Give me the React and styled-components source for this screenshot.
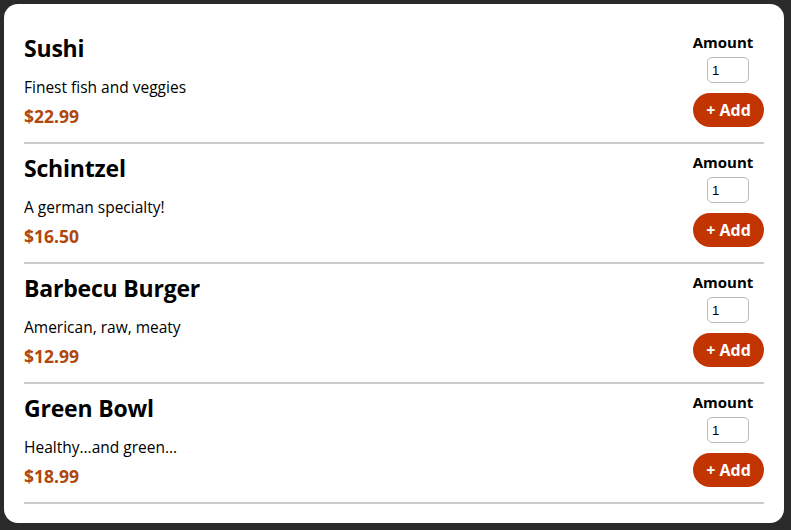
import React from "react";
import styled, { createGlobalStyle } from "styled-components";

const Global = createGlobalStyle`
  * { box-sizing: border-box; }
  html, body { margin: 0; padding: 0; }
  body {
    background: #2a2a2a;
    font-family: "Open Sans", "Noto Sans", sans-serif;
  }
`;

const Page = styled.main`
  padding: 4px 7px 7px 4px;
`;

const Card = styled.section`
  background: #ffffff;
  border-radius: 14px;
  padding: 20px 20px 19px;
`;

const List = styled.ul`
  list-style: none;
  margin: 0;
  padding: 0;
`;

const Item = styled.li`
  display: flex;
  justify-content: space-between;
  align-items: flex-start;
  padding: 9px 0 15px;
  border-bottom: 2px solid #cccccc;
`;

const Info = styled.div`
  display: flex;
  flex-direction: column;
`;

const Title = styled.h3`
  margin: 0;
  font-size: 23px;
  line-height: 30px;
  font-weight: 700;
  color: #000;
  letter-spacing: -0.2px;
`;

const Description = styled.p`
  margin: 14px 0 0;
  font-size: 15.5px;
  line-height: 20px;
  color: #000;
`;

const Price = styled.div`
  margin-top: 8px;
  font-size: 17.5px;
  line-height: 22px;
  font-weight: 700;
  color: #b0470e;
`;

const Form = styled.form`
  display: flex;
  flex-direction: column;
  align-items: flex-end;
`;

const AmountBox = styled.div`
  display: flex;
  flex-direction: column;
  align-items: center;
  width: 71px;
`;

const Label = styled.label`
  margin-right: 11px;
  font-size: 15px;
  line-height: 18px;
  font-weight: 700;
  color: #000;
  white-space: nowrap;
`;

const Input = styled.input`
  margin-top: 6px;
  margin-right: 1px;
  width: 42px;
  height: 26px;
  border: 1px solid #bbbbbb;
  border-radius: 5px;
  padding: 0 4px;
  font-family: "Liberation Sans", Arial, sans-serif;
  font-size: 13px;
  color: #000;
  background: #fff;
`;

const AddButton = styled.button`
  margin-top: 10px;
  width: 71px;
  height: 34px;
  border: none;
  border-radius: 17px;
  background: #c23400;
  color: #fff;
  font-family: inherit;
  font-size: 16px;
  font-weight: 700;
  cursor: pointer;
  padding: 0;
`;

const meals = [
  { name: "Sushi", description: "Finest fish and veggies", price: "$22.99" },
  { name: "Schintzel", description: "A german specialty!", price: "$16.50" },
  { name: "Barbecu Burger", description: "American, raw, meaty", price: "$12.99" },
  { name: "Green Bowl", description: "Healthy...and green...", price: "$18.99" },
];

export default function App() {
  return (
    <>
      <Global />
      <Page>
        <Card>
          <List>
            {meals.map((m, i) => (
              <Item key={m.name}>
                <Info>
                  <Title>{m.name}</Title>
                  <Description>{m.description}</Description>
                  <Price>{m.price}</Price>
                </Info>
                <Form onSubmit={(e) => e.preventDefault()}>
                  <AmountBox>
                    <Label htmlFor={`amount_${i}`}>Amount</Label>
                    <Input id={`amount_${i}`} type="number" min="1" max="5" step="1" defaultValue="1" />
                  </AmountBox>
                  <AddButton type="submit">+ Add</AddButton>
                </Form>
              </Item>
            ))}
          </List>
        </Card>
      </Page>
    </>
  );
}
